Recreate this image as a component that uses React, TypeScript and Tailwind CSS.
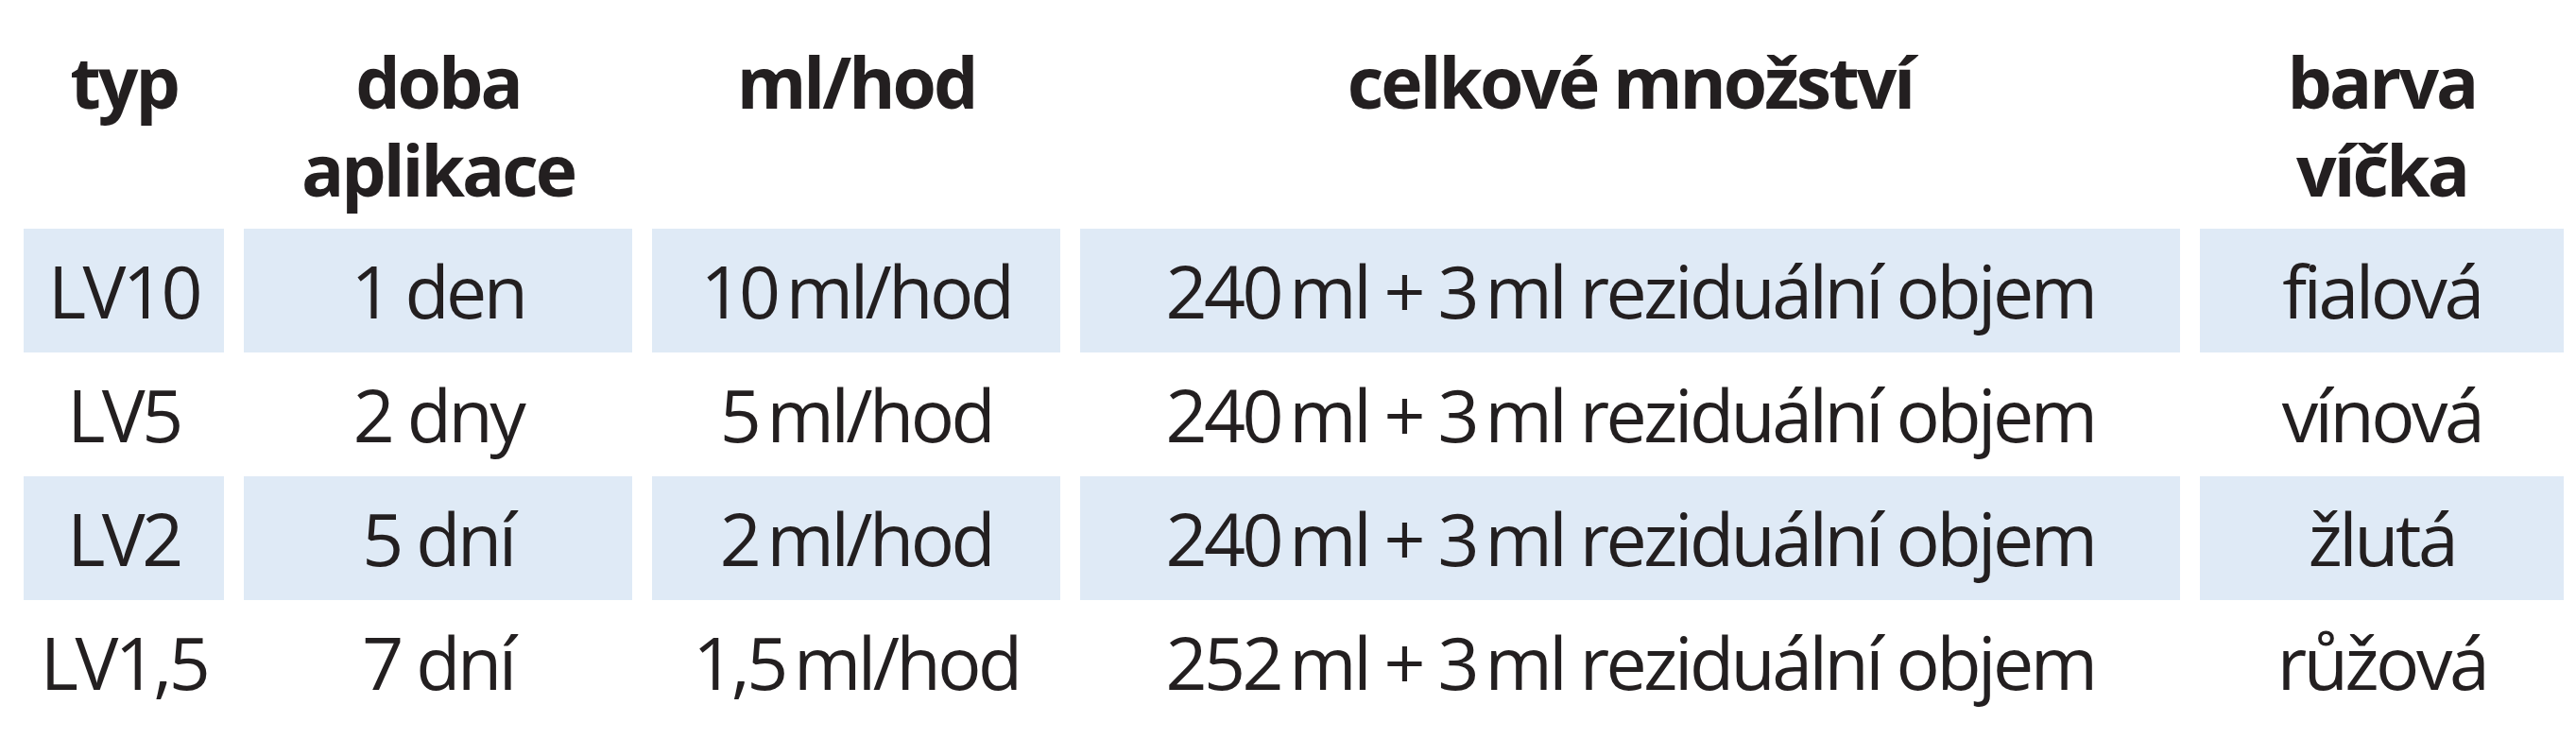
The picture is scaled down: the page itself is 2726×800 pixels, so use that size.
import React from 'react';

const T = '\u2009';

const rows = [
  ['LV10', '1 den', `10${T}ml/hod`, `240${T}ml + 3${T}ml reziduální objem`, 'fialová'],
  ['LV5', '2 dny', `5${T}ml/hod`, `240${T}ml + 3${T}ml reziduální objem`, 'vínová'],
  ['LV2', '5 dní', `2${T}ml/hod`, `240${T}ml + 3${T}ml reziduální objem`, 'žlutá'],
  ['LV1,5', '7 dní', `1,5${T}ml/hod`, `252${T}ml + 3${T}ml reziduální objem`, 'růžová'],
];

const headers = [['typ'], ['doba', 'aplikace'], ['ml/hod'], ['celkové množství'], ['barva', 'víčka']];

export default function App() {
  return (
    <div className="w-[2726px] h-[800px] bg-white text-[#231f20] font-['Open_Sans',sans-serif]">
      <div className="grid grid-cols-[212px_411px_432px_1164px_385px] gap-x-[21px] pl-[25px]">
        {headers.map((h, i) => (
          <div
            key={i}
            className="h-[242px] pt-[40px] text-center text-[75px] font-bold leading-[93px] tracking-[-3px]"
          >
            {h.map((line) => (
              <div key={line}>{line}</div>
            ))}
          </div>
        ))}
        {rows.map((r, ri) =>
          r.map((cell, ci) => (
            <div
              key={`${ri}-${ci}`}
              className={`h-[131px] flex items-center justify-center text-[77px] font-normal tracking-[-3.5px] whitespace-nowrap ${
                ri % 2 === 0 ? 'bg-[#dfeaf6]' : ''
              }`}
            >
              {cell}
            </div>
          ))
        )}
      </div>
    </div>
  );
}
